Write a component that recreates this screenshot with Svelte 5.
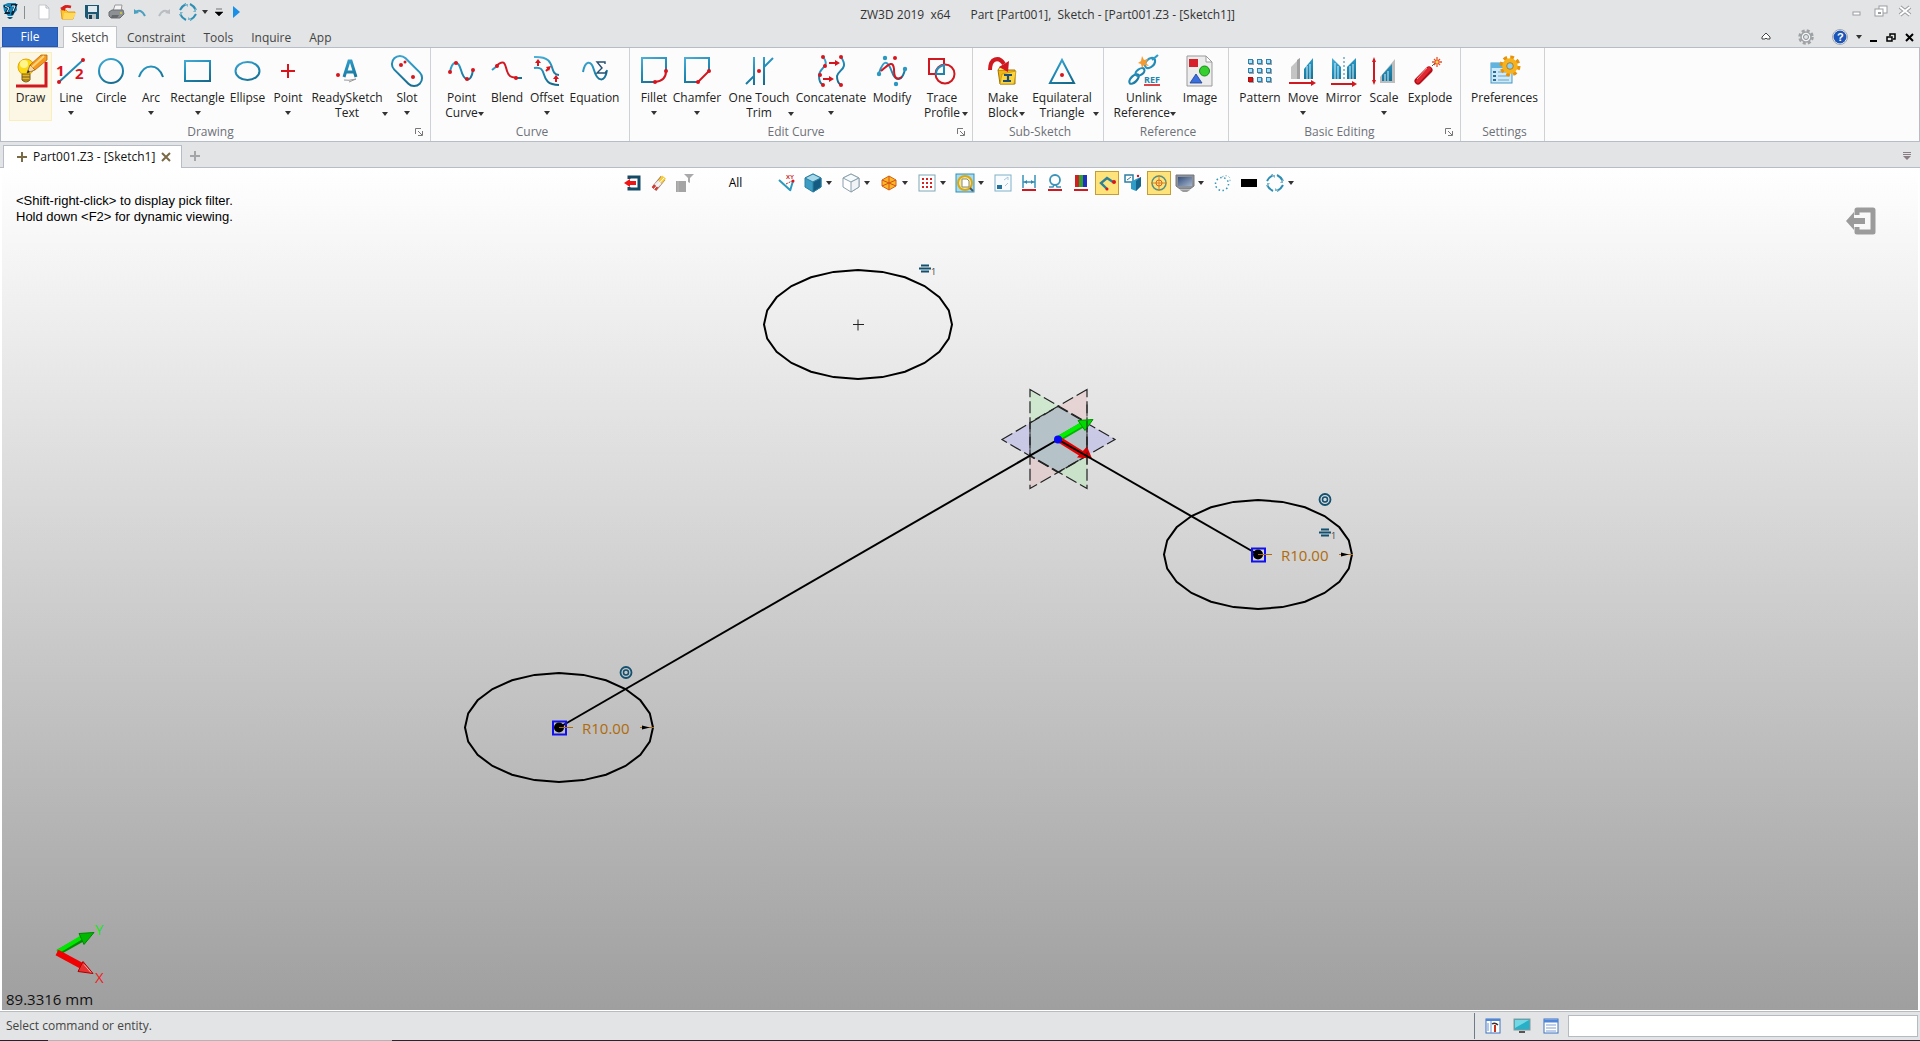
<script>
  const ribbon = [
    { name: 'Drawing', launcher: true, tools: [
      { icon: 'draw', a: 'Draw', w: 43, active: true },
      { icon: 'line', a: 'Line', w: 38, drop: true },
      { icon: 'circle', a: 'Circle', w: 42 },
      { icon: 'arc', a: 'Arc', w: 38, drop: true },
      { icon: 'rect', a: 'Rectangle', w: 55, drop: true },
      { icon: 'ellipse', a: 'Ellipse', w: 45 },
      { icon: 'point', a: 'Point', w: 36, drop: true },
      { icon: 'text', a: 'ReadySketch', b: 'Text', w: 82, drop: true },
      { icon: 'slot', a: 'Slot', w: 38, drop: true }
    ] },
    { name: 'Curve', tools: [
      { icon: 'pcurve', a: 'Point', b: 'Curve', w: 45, drop: true },
      { icon: 'blend', a: 'Blend', w: 46 },
      { icon: 'offset', a: 'Offset', w: 34, drop: true },
      { icon: 'equation', a: 'Equation', w: 61 }
    ] },
    { name: 'Edit Curve', launcher: true, tools: [
      { icon: 'fillet', a: 'Fillet', w: 32, drop: true },
      { icon: 'chamfer', a: 'Chamfer', w: 54, drop: true },
      { icon: 'trim', a: 'One Touch', b: 'Trim', w: 70, drop: true },
      { icon: 'concat', a: 'Concatenate', w: 74, drop: true },
      { icon: 'modify', a: 'Modify', w: 48 },
      { icon: 'trace', a: 'Trace', b: 'Profile', w: 52, drop: true }
    ] },
    { name: 'Sub-Sketch', tools: [
      { icon: 'block', a: 'Make', b: 'Block', w: 44, drop: true },
      { icon: 'triangle', a: 'Equilateral', b: 'Triangle', w: 74, drop: true }
    ] },
    { name: 'Reference', tools: [
      { icon: 'unlink', a: 'Unlink', b: 'Reference', w: 64, drop: true },
      { icon: 'image', a: 'Image', w: 48 }
    ] },
    { name: 'Basic Editing', launcher: true, tools: [
      { icon: 'pattern', a: 'Pattern', w: 46 },
      { icon: 'move', a: 'Move', w: 40, drop: true },
      { icon: 'mirror', a: 'Mirror', w: 41 },
      { icon: 'scale', a: 'Scale', w: 40, drop: true },
      { icon: 'explode', a: 'Explode', w: 52 }
    ] },
    { name: 'Settings', tools: [{ icon: 'prefs', a: 'Preferences', w: 71 }] }
  ];

  const dot = (x, y, r = 2) => `<circle cx="${x}" cy="${y}" r="${r}" fill="#d8141c"/>`;
  const B = 'fill="none" stroke="url(#blue)" stroke-width="2"';
  const R = 'fill="none" stroke="#cf1820" stroke-width="2"';
  let squares = '';
  for (let r = 0; r < 3; r++)
    for (let c = 0; c < 3; c++) {
      const x = 4 + c * 9, y = 4 + r * 9, red = r === 2 && c === 0;
      squares += `<rect x="${x + 1}" y="${y + 1}" width="5" height="5" fill="#9aa5ad"/><rect x="${x + 0.5}" y="${y + 0.5}" width="4" height="4" fill="${red ? '#e01010' : '#a8e0f8'}" stroke="${red ? '#b01010' : '#3580a8'}"/>`;
    }

  const big = {
    draw: `<path d="M1 31H31V7" fill="none" stroke="#cf1820" stroke-width="3"/><circle cx="11" cy="12" r="8" fill="#fbd916" stroke="#e2a70c"/><circle cx="9" cy="9" r="4" fill="#fff58c"/><path d="M7 19h8v6q-4 4-8 0z" fill="#e8b41c" stroke="#7a5f20"/><path d="M7 22h8M7 25h7" stroke="#6e5a28"/><path d="M12 18L15 10L20 15z" fill="#f6d6a4" stroke="#604020" stroke-width=".6"/><path d="M15 10L26 0H32V5L20 15z" fill="#f59a1c" stroke="#b5650a" stroke-width=".8"/><path d="M17 12L29 1" stroke="#ffd47c" stroke-width="2"/><path d="M12 18l1-3 2 2z" fill="#222"/>`,
    line: `<path d="M4 27L28 5" stroke="url(#blue)" stroke-width="2"/>${dot(4, 27)}${dot(28, 5)}<text class="num" x="1" y="21">1</text><text class="num" x="20" y="24">2</text>`,
    circle: `<circle cx="16" cy="16" r="12" ${B}/>`,
    arc: `<path d="M4 22C9 8 23 8 28 22" ${B}/>`,
    rect: `<rect x="3" y="6" width="25" height="20" ${B}/>`,
    ellipse: `<ellipse cx="15.500" cy="16" rx="12" ry="9" ${B}/>`,
    point: `<path d="M16 9V23M9 16H23" stroke="#d8141c" stroke-width="2"/>`,
    text: `${dot(7, 20)}<path d="M13 22L18 6H20L25 22M15 17H23" fill="none" stroke="url(#blue)" stroke-width="3"/><path d="M13 25q4 1 12-1l-7 3" fill="none" stroke="#999"/>`,
    slot: `<rect x="-2" y="8" width="36" height="16" rx="8" transform="rotate(45 16 16)" ${B}/>${dot(10, 10)}${dot(14, 7, 1.5)}${dot(22, 22)}`,
    pcurve: `<path d="M4 17C6 6 12 4 15 15C18 26 25 29 27 15" ${B}/>${dot(4, 17)}${dot(10, 8)}${dot(21, 24)}${dot(27, 15)}`,
    blend: `<path d="M1 15L6 11" ${B}/><path d="M5 11C14 3 14 10 16 16C18 22 20 22 26 23" ${R}/><path d="M25 23H31" ${B}/>${dot(6, 11)}${dot(25, 23)}`,
    offset: `<path d="M3 2C28 1 16 19 28 20M3 13C19 10 6 30 28 30" ${B}/><path d="M7 11V6M15 16L18 13M25 27V22" ${R}/><path d="M4 8L7 4L10 8zM15 12L20 11L18 16zM22 24L25 20L28 24z" fill="#d8141c"/>`,
    equation: `<path d="M4 17C6 6 12 4 15 15C18 26 26 29 28 15" ${B}/><path d="M26 9V7H18L23 13L18 18H27V16" fill="none" stroke="#254f70" stroke-width="1.4"/>`,
    fillet: `<path d="M17 27H4V3H28V16" ${B}/><path d="M28 16Q28 26 17 27" ${R}/>${dot(28, 16)}${dot(17, 27)}`,
    chamfer: `<path d="M17 27H4V3H28V16" ${B}/><path d="M28 16L17 27" ${R}/>${dot(28, 16)}${dot(17, 27)}`,
    trim: `<path d="M11 2V30M21 2V30M3 29L11 21M21 12L30 3" ${B}/>${dot(16, 16)}`,
    concat: `<path d="M8 2C16 12 4 12 4 21Q4 28 8 30M26 2C34 14 24 14 22 21Q22 28 26 30" ${B}/><path d="M14 8H21M8 24H15" ${R}/><path d="M20 5L25 8L20 11zM14 21L19 24L14 27z" fill="#d8141c"/>${dot(8, 2)}${dot(10, 11)}${dot(5, 20)}${dot(8, 30)}${dot(26, 2)}${dot(26, 30)}`,
    modify: `<path d="M3 18C8 3 12 6 16 17C20 28 27 25 29 14" ${B}/><path d="M5 16C14 8 17 6 18 14C18 22 20 26 26 22" ${R}/><g fill="#2b98c0"><circle cx="3" cy="19" r="2.2"/><circle cx="9" cy="3" r="2.2"/><circle cx="29" cy="14" r="2.2"/><circle cx="20" cy="29" r="2.2"/></g>${dot(19, 3)}`,
    trace: `<rect x="3" y="4" width="15" height="15" ${R}/><circle cx="19" cy="19" r="9.5" ${R}/><path d="M18 10V19H10Q10 12 18 10z" ${B}/>`,
    block: `<path d="M11 15H28V29H13z" fill="#f0b616" stroke="#a37408"/><path d="M11 15L13 12H19L21 15" fill="#ffe36a" stroke="#a37408"/><path d="M15 19L29 16L27 29H13z" fill="#fbd33b" stroke="#b4870a" stroke-width=".6"/><path d="M17 20h8M16 26h8M21 20v6" stroke="#1c4d78" stroke-width="2.2"/><path d="M3 15C3 3 12 1 17 9" fill="none" stroke="#cf1820" stroke-width="4"/><path d="M12 12L22 6L21 17z" fill="#cf1820"/>`,
    triangle: `<path d="M16 5L28 28H4z" ${B}/>${dot(16, 20)}`,
    unlink: `<g fill="none" stroke="url(#blue)" stroke-width="2.2"><ellipse cx="6" cy="24" rx="6" ry="3" transform="rotate(-45 6 24)"/><ellipse cx="12" cy="17" rx="5" ry="3" transform="rotate(-35 12 17)"/><ellipse cx="22" cy="8" rx="6" ry="4" transform="rotate(-45 22 8)"/><path d="M24 5L30 0"/></g><path d="M14 1l2 4 4-1-2 4 3 3-5-1-2 3-1-4-3-1 3-2z" fill="#f39a32"/><text class="ref" x="16" y="28">REF</text><path d="M16 30H32" stroke="#cf1820" stroke-width="1.6"/>`,
    image: `<path d="M3 1H22L28 7V31H3z" fill="#ececec" stroke="#9b9b9b"/><path d="M22 1V7H28z" fill="#fff" stroke="#9b9b9b"/><rect x="5" y="4" width="9" height="8" fill="#d6202a"/><circle cx="20.500" cy="16" r="5" fill="#35cf2e" stroke="#198a18"/><path d="M12 19L18 28H6z" fill="#3a6fe0" stroke="#1a3d93" stroke-width=".8"/>`,
    pattern: squares,
    move: `<path d="M4 24V12L13 3V24z" fill="#c4c4c4"/><path d="M10 5L13 3V24H10z" fill="#a0a0a0"/><path d="M17 24V14L26 3V24z" fill="url(#blue)"/><path d="M20 24V11M23 24V9" stroke="#d8f4ff"/><path d="M2 28H25" stroke="#cf1820" stroke-width="2"/><path d="M24 25L29 28L24 31z" fill="#cf1820"/>`,
    mirror: `<path d="M4 24V3L13 12V24z" fill="url(#blue)"/><path d="M19 24V12L28 3V24z" fill="url(#blue)"/><path d="M7 24V8M10 24V11M22 24V11M25 24V9" stroke="#d8f4ff"/><path d="M16 2V25" stroke="#2f7ea6" stroke-dasharray="2 2"/><path d="M3 29H25" stroke="#cf1820" stroke-width="2"/><path d="M24 26L29 29L24 32z" fill="#cf1820"/>`,
    scale: `<path d="M12 28V22L27 4V28z" fill="#bdbdbd"/><path d="M14 26V20L24 9V26z" fill="url(#blue)"/><path d="M17 26V19M20 26V16" stroke="#d8f4ff"/><path d="M6 6V26" stroke="#cf1820" stroke-width="2"/><path d="M4 7L6 2L8 7zM4 25L6 30L8 25z" fill="#cf1820"/>`,
    explode: `<path d="M4 26L15 15" stroke="#b30f18" stroke-width="7" stroke-linecap="round"/><path d="M4 26L15 14" stroke="#e02832" stroke-width="4" stroke-linecap="round"/><path d="M3 24L13 13" stroke="#ff8a8a" stroke-width="1"/><path d="M18 11L21 8" stroke="#555"/><path d="M23 2V12M18 7H28M20 4L26 10M26 4L20 10" stroke="#e8502c" stroke-width="1.3"/><circle cx="23" cy="7" r="1.500" fill="#ffd34a"/>`,
    prefs: `<rect x="2" y="8" width="21" height="20" fill="#cdeafa" stroke="#4696c4"/><rect x="2" y="8" width="21" height="5" fill="#5fb4e0"/><path d="M4 17h3M4 21h3M4 25h3" stroke="#2c6e98" stroke-width="2"/><path d="M9 17h8M9 21h11M9 25h11" stroke="#6fa4c0"/><circle cx="21" cy="11" r="8.500" fill="none" stroke="#e8920c" stroke-width="4" stroke-dasharray="3.6 3.070"/><circle cx="21" cy="11" r="5.500" fill="#7cc2ea" stroke="#f8b21c" stroke-width="4.500"/><circle cx="21" cy="11" r="3.300" fill="#8ed0f0" stroke="#b06b08" stroke-width=".8"/>`
  };

  const ring = `<g fill="none" stroke="#2e8fb5" stroke-width="2"><path d="M8 2Q4 4 2 8M12 2Q16 4 18 8M2 12Q4 16 8 18M18 12Q16 16 12 18"/></g><path d="M6 2h4v3zM18 6v4h-3zM14 18h-4v-3zM2 14v-4h3z" fill="#7fb8cc"/>`;
  const cube = (top, left, right, line) =>
    `<path d="M10 1L18 5V14L10 19L2 14V5z" fill="${left}" stroke="${line}"/><path d="M10 1L18 5L10 9L2 5z" fill="${top}" stroke="${line}"/><path d="M10 9L18 5V14L10 19z" fill="${right}" stroke="${line}"/>`;
  const small = {
    logo: `<path d="M3 3L8 1L16 1L17 8L12 14L8 14L4 9z" fill="#1585b8"/><path d="M4 4L9 6L6 11L10 11M11 3L16 3L12 12M15 5L12 13" fill="none" stroke="#06243a" stroke-width="2.2"/><path d="M5 4L9 6L7 10M12 4L15 4L13 9" fill="none" stroke="#e6f7ff" stroke-width="1"/><path d="M7 15H13L11 17H9z" fill="#0e5d88"/>`,
    file: `<path d="M5 3H12L15 6V17H5z" fill="#fff" stroke="#c6c9cc"/><path d="M12 3V6H15" fill="none" stroke="#b3b8bc"/>`,
    open: `<path d="M3 8H8L10 10H17L15 17H4z" fill="#fcc32e" stroke="#e59a12"/><path d="M6 11H18L15 17H5z" fill="#ffd95c"/><path d="M4 8Q6 3 13 5" fill="none" stroke="#d8201c" stroke-width="2.600"/><path d="M2 6L8 3L7 9z" fill="#d8201c"/>`,
    save: `<path d="M3 3H17V17H5L3 15z" fill="#1c5874"/><rect x="6" y="4" width="9" height="6" fill="#dfeaf0"/><rect x="6" y="12" width="8" height="5" fill="#b8c4ca"/><rect x="7" y="13" width="3" height="4" fill="#193e52"/>`,
    print: `<path d="M7 9L9 3H16L15 9z" fill="#f5f5f5" stroke="#999"/><path d="M3 10L6 8H17L18 12L14 16H5L3 14z" fill="#8d9094" stroke="#6a6d70"/><path d="M6 13H13L11 16H5z" fill="#65686c"/><circle cx="15" cy="11" r="1" fill="#d6d12a"/>`,
    undo: `<path d="M5 10Q11 6 15 14" fill="none" stroke="#4ba0c0" stroke-width="2"/><path d="M4 12V7L9 11z" fill="#4ba0c0"/>`,
    redo: `<path d="M15 10Q9 6 5 14" fill="none" stroke="#b9bdc1" stroke-width="2"/><path d="M16 12V7L11 11z" fill="#b9bdc1"/>`,
    ring,
    exit: `<path d="M6 6V4H16V16H6V14" fill="none" stroke="#154a66" stroke-width="3"/><path d="M1 10L7 6V8H13V12H7V14z" fill="#f01414"/>`,
    eraser: `<path d="M5 16L14 5" stroke="#9a7060" stroke-width="6"/><path d="M11 9L15 4" stroke="#f6cc38" stroke-width="5"/><path d="M7 13L11 9" stroke="#eee" stroke-width="5"/><path d="M5 16L7 13" stroke="#d83a34" stroke-width="5"/><path d="M5 16L15 5" stroke="#fff" stroke-width="1"/>`,
    filter: `<rect x="1" y="8" width="10" height="11" fill="#a4a4a4"/><path d="M3 8V19" stroke="#bbb"/><path d="M9 1H19L15 5V10L13 9V5z" fill="#a9a9a9"/>`,
    xy: `<path d="M2 7L13 17M13 18L16 8" stroke="#2b98c0" stroke-width="2"/><path d="M9 11L17 7" stroke="#b03030" stroke-dasharray="2 1"/><text class="xy" x="9" y="6">XY</text>${dot(16, 8, 1.5)}`,
    cube: cube('#a7d8ea', '#3c9cc4', '#155a80', '#2c7ea2'),
    wire: cube('#f6fbfd', '#fff', '#f0f4f6', '#8ba0ac'),
    orange: `<path d="M10 3L17 7V13L10 17L3 13V7z" fill="#fbb726" stroke="#d4601a"/><path d="M3 13L17 7M3 7L17 13M10 3V17" stroke="#d4501a"/>`,
    grid: `<rect x="2" y="2" width="16" height="16" fill="#fff" stroke="#7fa6b6"/><path d="M5 6H16M5 10H16M5 14H16" stroke="#d82020" stroke-width="2" stroke-dasharray="2 2"/>`,
    zoom: `<rect x="1" y="1" width="18" height="18" fill="#a8daf0" stroke="#2f8fb8"/><circle cx="10" cy="10" r="7" fill="#f2e7a0" stroke="#d8a818" stroke-width="2"/><path d="M7 6H12L14 8V14H7z" fill="#fff" stroke="#8b8b6a"/><path d="M15 15L18 18" stroke="#555" stroke-width="2"/>`,
    win: `<rect x="2" y="2" width="16" height="16" fill="#f8fcff" stroke="#7eb0c8"/><rect x="4" y="12" width="5" height="4" fill="#23729c"/><path d="M11 7L15 4M15 4V7M12 13L15 10" stroke="#a9c8d6"/>`,
    dim: `<path d="M4 2V15M16 2V15M4 9H16" fill="none" stroke="#3a93b8" stroke-width="1.500"/><path d="M3 17H17" stroke="#cf1820" stroke-width="2"/><path d="M5 9L8 7V11zM15 9L12 7V11z" fill="#2b88b0"/>`,
    loupe: `<circle cx="10" cy="7" r="5" fill="none" stroke="#3a93b8" stroke-width="1.800"/><path d="M4 14H8L9 12M16 14H12L11 12" fill="none" stroke="#3a93b8" stroke-width="1.500"/><path d="M3 17H17" stroke="#cf1820" stroke-width="2"/>`,
    palette: `<rect x="4" y="2" width="4" height="12" fill="#d02020"/><rect x="8" y="2" width="4" height="12" fill="#30a030"/><rect x="12" y="2" width="4" height="12" fill="#2030c0"/><path d="M3 17H17" stroke="#cf1820" stroke-width="2"/>`,
    chain: `<path d="M16 9L10 5L4 10L10 16" fill="none" stroke="#2e8098" stroke-width="2.400"/>${dot(17, 9)}${dot(10, 16, 1.5)}`,
    view: `<rect x="2" y="2" width="8" height="7" fill="#fff" stroke="#2e7ca2" stroke-width="1.500"/><path d="M8 9L13 6L18 4V13L13 18L8 16z" fill="#2f9cc8"/><path d="M13 8L18 4V13L13 18z" fill="#16648c"/><path d="M4 7L8 4" stroke="#2e7ca2"/>${dot(15, 3, 1.2)}`,
    target: `<circle cx="10" cy="10" r="7" fill="none" stroke="#5b8f80" stroke-width="1.500"/><path d="M10 2V18M2 10H18" stroke="#d88420"/><circle cx="10" cy="10" r="3" fill="none" stroke="#d86428"/>`,
    monitor: `<path d="M1 2H19V13L15 16H5L1 13z" fill="#8d929a" stroke="#74787e"/><rect x="3" y="4" width="14" height="9" fill="url(#screen)"/><path d="M5 17H15L12 19H8z" fill="#9a9a9a"/>`,
    dots: `<circle cx="9" cy="11" r="6.500" fill="none" stroke="#3897b8" stroke-width="1.500" stroke-dasharray="1.500 2.500"/><path d="M9 4Q14 1 17 5V10" fill="none" stroke="#72aec4" stroke-dasharray="1.500 2"/>`,
    black: `<rect x="2" y="6" width="16" height="8" fill="#000"/>`,
    toolwin: `<rect x="3" y="3" width="14" height="14" fill="#fff" stroke="#3c72c0"/><path d="M3 4H17" stroke="#4f86d8" stroke-width="2"/><path d="M8 5V17M5 7V15" stroke="#6a93d0"/><path d="M9 8Q12 6 15 9" fill="none" stroke="#333" stroke-width="1.500"/><path d="M12 9V16" stroke="#c83018" stroke-width="2"/>`,
    display: `<rect x="2" y="3" width="16" height="11" fill="#28b0c8" stroke="#8c989c"/><path d="M3 4H17L3 12z" fill="#74d8e4"/><path d="M7 15H13V17H7z" fill="#555"/>`,
    listwin: `<rect x="3" y="3" width="14" height="14" fill="#fff" stroke="#3c72c0"/><path d="M3 5H17" stroke="#4f86d8" stroke-width="3"/><path d="M5 9H15M5 12H15M5 15H15" stroke="#7f9fd0"/>`,
    gear: `<circle cx="10" cy="10" r="6.500" fill="none" stroke="#9fa2a5" stroke-width="2.500" stroke-dasharray="3 2.100"/><circle cx="10" cy="10" r="5" fill="#f4f5f6" stroke="#9fa2a5" stroke-width="1.500"/><circle cx="10" cy="10" r="2.500" fill="#e3e5e7" stroke="#8c8f92"/>`,
    help: `<circle cx="10" cy="10" r="7.500" fill="#fff" stroke="#a2a6aa"/><circle cx="10" cy="10" r="6.500" fill="#1d56b8"/><text class="q" x="7" y="14">?</text>`,
    caret: `<path d="M6 12V10L10 6L14 10V12H11L10 11L9 12z" fill="#fff" stroke="#444"/>`,
    min: `<rect x="6" y="11" width="7" height="3" fill="#fff" stroke="#9a9da0"/>`,
    max: `<rect x="8" y="5" width="8" height="7" fill="#fff" stroke="#9a9da0"/><rect x="4" y="8" width="8" height="7" fill="#fff" stroke="#9a9da0"/><rect x="7" y="11" width="3" height="2" fill="#9a9da0"/>`,
    close: `<path d="M5 6L15 14M15 6L5 14" stroke="#9a9da0" stroke-width="4"/><path d="M5 6L15 14M15 6L5 14" stroke="#fff" stroke-width="2"/>`,
    min2: `<path d="M7 14H14" stroke="#000" stroke-width="2"/>`,
    max2: `<path d="M9 9V7H14V12H12M6 10H11V14H6z" fill="none" stroke="#000" stroke-width="1.500"/>`,
    close2: `<path d="M7 7L14 14M14 7L7 14" stroke="#000" stroke-width="2"/>`
  };

  const quick = ['file', 'open', 'save', 'print', 'undo', 'redo', 'ring'];
  const viewTools = [
    { icon: 'xy' }, { icon: 'cube', drop: true }, { icon: 'wire', drop: true }, { icon: 'orange', drop: true },
    { icon: 'grid', drop: true }, { icon: 'zoom', drop: true }, { icon: 'win' }, { icon: 'dim' }, { icon: 'loupe' },
    { icon: 'palette' }, { icon: 'chain', on: true }, { icon: 'view' }, { icon: 'target', on: true },
    { icon: 'monitor', drop: true }, { icon: 'dots' }, { icon: 'black' }, { icon: 'ring', drop: true }
  ];

  // A circle seen in the isometric view, drawn as 24 chords.
  const facets = (cx, cy) =>
    Array.from({ length: 24 }, (_, i) => {
      const t = (i * Math.PI) / 12;
      return `${(cx + 94 * Math.cos(t)).toFixed(1)},${(cy + 54.5 * Math.sin(t)).toFixed(1)}`;
    }).join(' ');
  const origin = { x: 1058, y: 271 };
  const circles = [{ x: 858, y: 156 }, { x: 1258, y: 386 }, { x: 559, y: 559 }];
  const concentric = [{ x: 1325, y: 331 }, { x: 626, y: 504 }];
  const equals = [{ x: 925, y: 101 }, { x: 1325, y: 365 }];
</script>

{#snippet ico(name)}
  <svg class="ico" viewBox="0 0 20 20" aria-hidden="true">{@html small[name]}</svg>
{/snippet}

{#snippet tri()}
  <svg class="tri" viewBox="0 0 6 4" aria-hidden="true"><path d="M0 0H6L3 4z" fill="#333" /></svg>
{/snippet}

<div class="app">
  <svg class="defs" aria-hidden="true">
    <defs>
      <linearGradient id="blue" gradientUnits="userSpaceOnUse" x1="0" y1="0" x2="14" y2="32">
        <stop offset="0" stop-color="#58b8e0" /><stop offset=".5" stop-color="#2390bc" /><stop offset="1" stop-color="#176a8c" />
      </linearGradient>
      <linearGradient id="screen" x1="0" y1="0" x2="1" y2="1">
        <stop offset="0" stop-color="#35507c" /><stop offset="1" stop-color="#a4b4cc" />
      </linearGradient>
    </defs>
  </svg>

  <header class="title">
    <div class="quick">
      {@render ico('logo')}
      <span class="bar"></span>
      {#each quick as q}
        <button class="qbtn" aria-label={q}>{@render ico(q)}</button>
      {/each}
      <button class="mini" aria-label="View list">{@render tri()}</button>
      <button class="mini custom" aria-label="Customize">
        <svg viewBox="0 0 8 8" width="8" height="8"><path d="M1 1H7M0 4H8L4 8z" stroke="#000" stroke-width=".5" /></svg>
      </button>
      <button class="mini" aria-label="Play">
        <svg viewBox="0 0 7 12" width="7" height="12"><path d="M0 0L7 6L0 12z" fill="#1a8fe8" /></svg>
      </button>
    </div>
    <h1><span>ZW3D 2019&nbsp; x64</span><span>Part [Part001],&nbsp; Sketch - [Part001.Z3 - [Sketch1]]</span></h1>
    <div class="wctl">
      <button aria-label="Minimize">{@render ico('min')}</button>
      <button aria-label="Restore">{@render ico('max')}</button>
      <button aria-label="Close">{@render ico('close')}</button>
    </div>
  </header>

  <nav class="tabs">
    <button class="file">File</button>
    <button class="sel">Sketch</button>
    <button>Constraint</button>
    <button>Tools</button>
    <button>Inquire</button>
    <button>App</button>
    <div class="tabctl">
      <button class="wide" aria-label="Collapse ribbon">{@render ico('caret')}</button>
      <button class="wide" aria-label="Settings">{@render ico('gear')}</button>
      <button aria-label="Help">{@render ico('help')}</button>
      <button class="mini" aria-label="Help menu">{@render tri()}</button>
      <button class="tight" aria-label="Minimize document">{@render ico('min2')}</button>
      <button class="tight" aria-label="Restore document">{@render ico('max2')}</button>
      <button class="tight" aria-label="Close document">{@render ico('close2')}</button>
    </div>
  </nav>

  <div class="ribbon">
    {#each ribbon as g}
      <section>
        <div class="tools">
          {#each g.tools as t}
            <button class="tool" class:active={t.active} style:width="{t.w}px">
              <svg class="big" viewBox="0 0 32 32" aria-hidden="true">{@html big[t.icon]}</svg>
              <span class="lab">{t.a}</span>
              {#if t.b}
                <span class="second"><span>{t.b}</span>{@render tri()}</span>
              {:else if t.drop}
                <span class="under">{@render tri()}</span>
              {/if}
            </button>
          {/each}
        </div>
        <div class="gname">
          <span>{g.name}</span>
          {#if g.launcher}
            <button class="launch" aria-label="{g.name} options">
              <svg viewBox="0 0 8 8" width="8" height="8"><path d="M.5 6V.5H6M3 3L7 7M7.500 3V7.500H3" fill="none" stroke="#777" /></svg>
            </button>
          {/if}
        </div>
      </section>
    {/each}
  </div>

  <div class="docs">
    <div class="doc">
      <svg viewBox="0 0 10 10" width="10" height="10"><path d="M5 0V10M0 5H10" stroke="#7a6a45" stroke-width="2" /></svg>
      <span>Part001.Z3 - [Sketch1]</span>
      <button aria-label="Close tab"><svg viewBox="0 0 10 10" width="10" height="10"><path d="M1 1L9 9M9 1L1 9" stroke="#7a6a45" stroke-width="2" /></svg></button>
    </div>
    <button class="add" aria-label="New tab"><svg viewBox="0 0 10 10" width="10" height="10"><path d="M5 0V10M0 5H10" stroke="#a3a5a8" stroke-width="2" /></svg></button>
    <button class="list" aria-label="Tab list"><svg viewBox="0 0 8 8" width="8" height="8"><path d="M0 .5H8M0 2.500H8" stroke="#8a7d84" /><path d="M0 4H8L4 8z" fill="#8a7d84" /></svg></button>
  </div>

  <main>
    <svg class="scene" viewBox="0 0 1920 842" role="img" aria-label="Sketch geometry">
      <g class="planes">
        <path d="M1002 271L1058 238L1115 271L1058 304z" fill="#a8a8f0" />
        <path d="M1030 221L1087 254V320L1030 287z" fill="#b0ecb0" />
        <path d="M1087 221L1030 254V320L1087 287z" fill="#e8bcbc" />
        <path d="M1030 254L1058 238L1087 254V287L1058 304L1030 287z" fill="#8fb4c8" />
      </g>
      <g class="dashes">
        <path d="M1002 271L1058 238L1115 271L1058 304z" />
        <path d="M1030 221L1087 254V320L1030 287z" />
        <path d="M1087 221L1030 254V320L1087 287z" />
      </g>
      <path d="M1059 270L1083 256" stroke="#00b400" stroke-width="6" />
      <path d="M1059 269L1083 255" stroke="#00f000" stroke-width="4" />
      <path d="M1078 252L1093 251L1085 262z" fill="#00d800" stroke="#009000" />
      <path d="M1059 271L1083 286" stroke="#e80000" stroke-width="6" />
      <path d="M1087 278L1092 290L1077 289z" fill="#d80000" />
      <path d="M1087 236V300" stroke="#222" stroke-dasharray="12 4" />
      {#each circles as c, i}
        <polygon class="ink" points={facets(c.x, c.y)} />
        {#if i > 0}
          <path class="ink" d="M{origin.x} {origin.y}L{c.x} {c.y}" />
          <rect x={c.x - 6} y={c.y - 6} width="13" height="13" fill="none" stroke="#1010f0" stroke-width="2" />
          <circle cx={c.x} cy={c.y} r="5" />
          <path d="M{c.x} {c.y}h14M{c.x + 81} {c.y}h14" stroke="#b06a08" />
          <path d="M{c.x + 91} {c.y}l-8 -2v4z" />
          <text class="dimtext" x={c.x + 23} y={c.y + 6}>R10.00</text>
        {:else}
          <path d="M{c.x - 5} {c.y}h11M{c.x} {c.y - 5}v11" stroke="#222" />
        {/if}
      {/each}
      <circle cx={origin.x} cy={origin.y} r="4" fill="#0a0af0" />
      {#each concentric as c}
        <g fill="none" stroke="#12506f">
          <circle cx={c.x} cy={c.y} r="5.500" stroke-width="1.800" /><circle cx={c.x} cy={c.y} r="2.500" stroke-width="1.500" />
        </g>
      {/each}
      {#each equals as e}
        <path d="M{e.x - 4} {e.y - 4}h8M{e.x - 6} {e.y - 1}h12M{e.x - 4} {e.y + 2}h8" stroke="#12506f" stroke-width="2" />
        <text class="sub" x={e.x + 6} y={e.y + 5}>1</text>
      {/each}
      <path d="M58 784L83 770" stroke="#008c00" stroke-width="6" />
      <path d="M58 783L83 768" stroke="#00e800" stroke-width="4" />
      <path d="M79 765L94 764L84 776z" fill="#00b800" stroke="#008800" />
      <path d="M57 784L81 797" stroke="#f00000" stroke-width="6" />
      <path d="M83 793L93 805L78 803z" fill="#e83030" stroke="#b00000" />
      <path d="M84 796L91 804" stroke="#ffb0b0" />
      <text class="axis" x="95" y="766" fill="#10e810">Y</text>
      <text class="axis" x="95" y="814" fill="#f02020">X</text>
    </svg>

    <div class="viewbar">
      <button aria-label="Exit sketch">{@render ico('exit')}</button>
      <button aria-label="Erase">{@render ico('eraser')}</button>
      <button aria-label="Filter">{@render ico('filter')}</button>
      <span class="all">All</span>
      {#each viewTools as v}
        <button class:on={v.on} aria-label={v.icon}>{@render ico(v.icon)}</button>
        {#if v.drop}<button class="vdrop" aria-label="{v.icon} menu">{@render tri()}</button>{/if}
      {/each}
    </div>
    <p class="hint">&lt;Shift-right-click&gt; to display pick filter.<br />Hold down &lt;F2&gt; for dynamic viewing.</p>
    <button class="leave" aria-label="Exit">
      <svg viewBox="0 0 30 28" width="30" height="28"><path d="M11 8V3H27V25H11V20" fill="none" stroke="#9b9b9b" stroke-width="5" stroke-linejoin="round" /><path d="M0 14L8 5V11H19V17H8V23z" fill="#9b9b9b" /></svg>
    </button>
    <span class="measure">89.3316 mm</span>
  </main>

  <footer>
    <span class="msg">Select command or entity.</span>
    <div class="sicons">
      <button aria-label="Manager">{@render ico('toolwin')}</button>
      <button aria-label="Display">{@render ico('display')}</button>
      <button aria-label="Output">{@render ico('listwin')}</button>
    </div>
    <input type="text" aria-label="Command" />
  </footer>
</div>

<style>
  :global(body) { margin: 0; }
  .app {
    display: flex; flex-direction: column; min-height: 100vh; background: #e2e4e6;
    font: 12px/16px 'Open Sans', 'Noto Sans', sans-serif; color: #222;
  }
  .defs { position: absolute; width: 0; height: 0; }
  button { appearance: none; border: 0; background: none; padding: 0; margin: 0; font: inherit; color: inherit; display: flex; align-items: center; justify-content: center; }
  .ico { width: 20px; height: 20px; flex: none; display: block; }
  .tri { width: 6px; height: 4px; flex: none; }
  .app :global(.num) { font: bold 15px 'Open Sans', sans-serif; fill: #d8141c; }
  .app :global(.ref) { font: bold 9px 'Open Sans', sans-serif; fill: #2384ac; }
  .app :global(.xy) { font: bold 6px 'Liberation Sans', sans-serif; fill: #d02020; }
  .app :global(.q) { font: bold 11px 'Liberation Sans', sans-serif; fill: #fff; }

  .title { display: flex; align-items: flex-start; height: 26px; }
  .quick { display: flex; align-items: center; height: 24px; width: 248px; }
  .bar { width: 1px; height: 13px; background: #8a8d90; margin: 0 7px 0 4px; }
  .qbtn { width: 24px; height: 24px; }
  .mini { width: 10px; height: 20px; }
  .custom { margin: 0 7px 0 4px; }
  h1 { flex: 1; display: flex; justify-content: center; gap: 20px; margin: 0; padding-top: 7px; font-size: 12px; font-weight: 400; color: #333; white-space: nowrap; }
  .wctl { display: flex; gap: 4px; padding: 1px 5px 0 0; }

  .tabs { display: flex; align-items: stretch; height: 21px; padding-left: 2px; color: #444; }
  .tabs > button { padding: 2px 9px 0; }
  .tabs > .file { box-sizing: border-box; background: #2f68c4; border: 1px solid #2456b4; color: #fff; width: 56px; padding: 0; margin: 1px 5px 0 0; }
  .tabs > .sel { background: #fdfdfd; border: 1px solid #c0c4c8; border-bottom: 0; width: 54px; padding: 0; box-sizing: border-box; margin: 0 1px -1px 0; position: relative; }
  .tabctl { margin-left: auto; display: flex; align-items: center; padding-right: 2px; }
  .tabctl .wide { width: 40px; }
  .tabctl button { width: 28px; }
  .tabctl .mini { width: 10px; }
  .tabctl .tight { width: 18px; }

  .ribbon { display: flex; height: 93px; background: #fcfcfc; border: 1px solid #b6bdc6; }
  section { display: flex; flex-direction: column; justify-content: space-between; padding: 0 4px 0 8px; border-right: 1px solid #ced2d7; }
  .tools { display: flex; align-items: flex-start; padding-top: 4px; }
  .tool { flex-direction: column; justify-content: flex-start; height: 69px; padding-top: 3px; box-sizing: border-box; line-height: 15px; white-space: nowrap; }
  .tool.active { background: #fcf7e4; outline: 1px solid #faeebb; outline-offset: -1px; }
  .big { width: 32px; height: 32px; flex: none; overflow: visible; }
  .lab { margin-top: 3px; }
  .second { display: grid; grid-template-columns: 1fr auto 1fr; align-items: center; width: 100%; }
  .second > span { grid-column: 2; }
  .second .tri { justify-self: end; margin-top: 2px; }
  .under { height: 15px; display: flex; align-items: center; padding-top: 1px; box-sizing: border-box; }
  .gname { display: flex; align-items: center; color: #6c7078; height: 18px; }
  .gname > span { flex: 1; text-align: center; }
  .launch { width: 14px; }

  .docs { display: flex; align-items: flex-end; height: 26px; border-bottom: 1px solid #b6bdc6; box-sizing: border-box; padding: 0 9px 0 3px; }
  .doc { display: flex; align-items: center; gap: 6px; height: 22px; padding: 0 10px 0 13px; background: #fff; border: 1px solid #b6bdc6; border-bottom: 0; margin-bottom: -1px; color: #111; white-space: nowrap; }
  .add { width: 26px; height: 22px; }
  .list { margin-left: auto; height: 22px; }

  main { flex: 1; position: relative; min-height: 480px; background: linear-gradient(#fff, #9f9f9f); box-shadow: inset 2px -1px #fff, inset -2px 0 #fff; }
  .scene { position: absolute; inset: 0; width: 100%; height: 100%; }
  .planes path { opacity: 0.4; }
  .dashes path { fill: none; stroke: #222; stroke-width: 1.2; stroke-dasharray: 12 4; }
  .ink { fill: none; stroke: #000; stroke-width: 2; }
  .dimtext { font: 15px 'Open Sans', sans-serif; fill: #b06a08; }
  .sub { font: 9px 'Open Sans', sans-serif; fill: #444; }
  .axis { font: 15px 'Open Sans', sans-serif; }
  .viewbar { position: relative; display: flex; justify-content: center; padding: 3px 1px 0 0; }
  .viewbar button { width: 24px; height: 24px; margin: 0 1px; flex: none; }
  .viewbar .on { background: #fde37a; outline: 1px solid #c59d30; outline-offset: -1px; }
  .viewbar .vdrop { width: 12px; margin: 0; justify-content: flex-start; }
  .all { width: 76px; text-align: center; line-height: 24px; color: #000; font-size: 12px; }
  .hint { position: absolute; left: 16px; top: 25px; margin: 0; font: 13px/16px 'Liberation Sans', Arial, sans-serif; color: #000; }
  .leave { position: absolute; right: 44px; top: 39px; }
  .measure { position: absolute; left: 6px; bottom: 1px; font-size: 15px; line-height: 22px; color: #111; }

  footer {
    display: flex; align-items: center; height: 30px; box-sizing: border-box; padding: 0 2px 1px 6px; border-top: 1px solid #b9bcbf;
    background: linear-gradient(to right, #26222c 48px, #b4b4b4 48px 392px, #26262e 392px) bottom / 100% 1px no-repeat, #e2e4e6;
    color: #444;
  }
  .msg { flex: 1; }
  .sicons { display: flex; gap: 9px; border-left: 1px solid #6f7c88; padding: 3px 7px 3px 8px; }
  footer input { width: 350px; height: 22px; box-sizing: border-box; border: 1px solid #b4bcc2; background: #fff; padding: 0 4px; font: inherit; }
</style>
